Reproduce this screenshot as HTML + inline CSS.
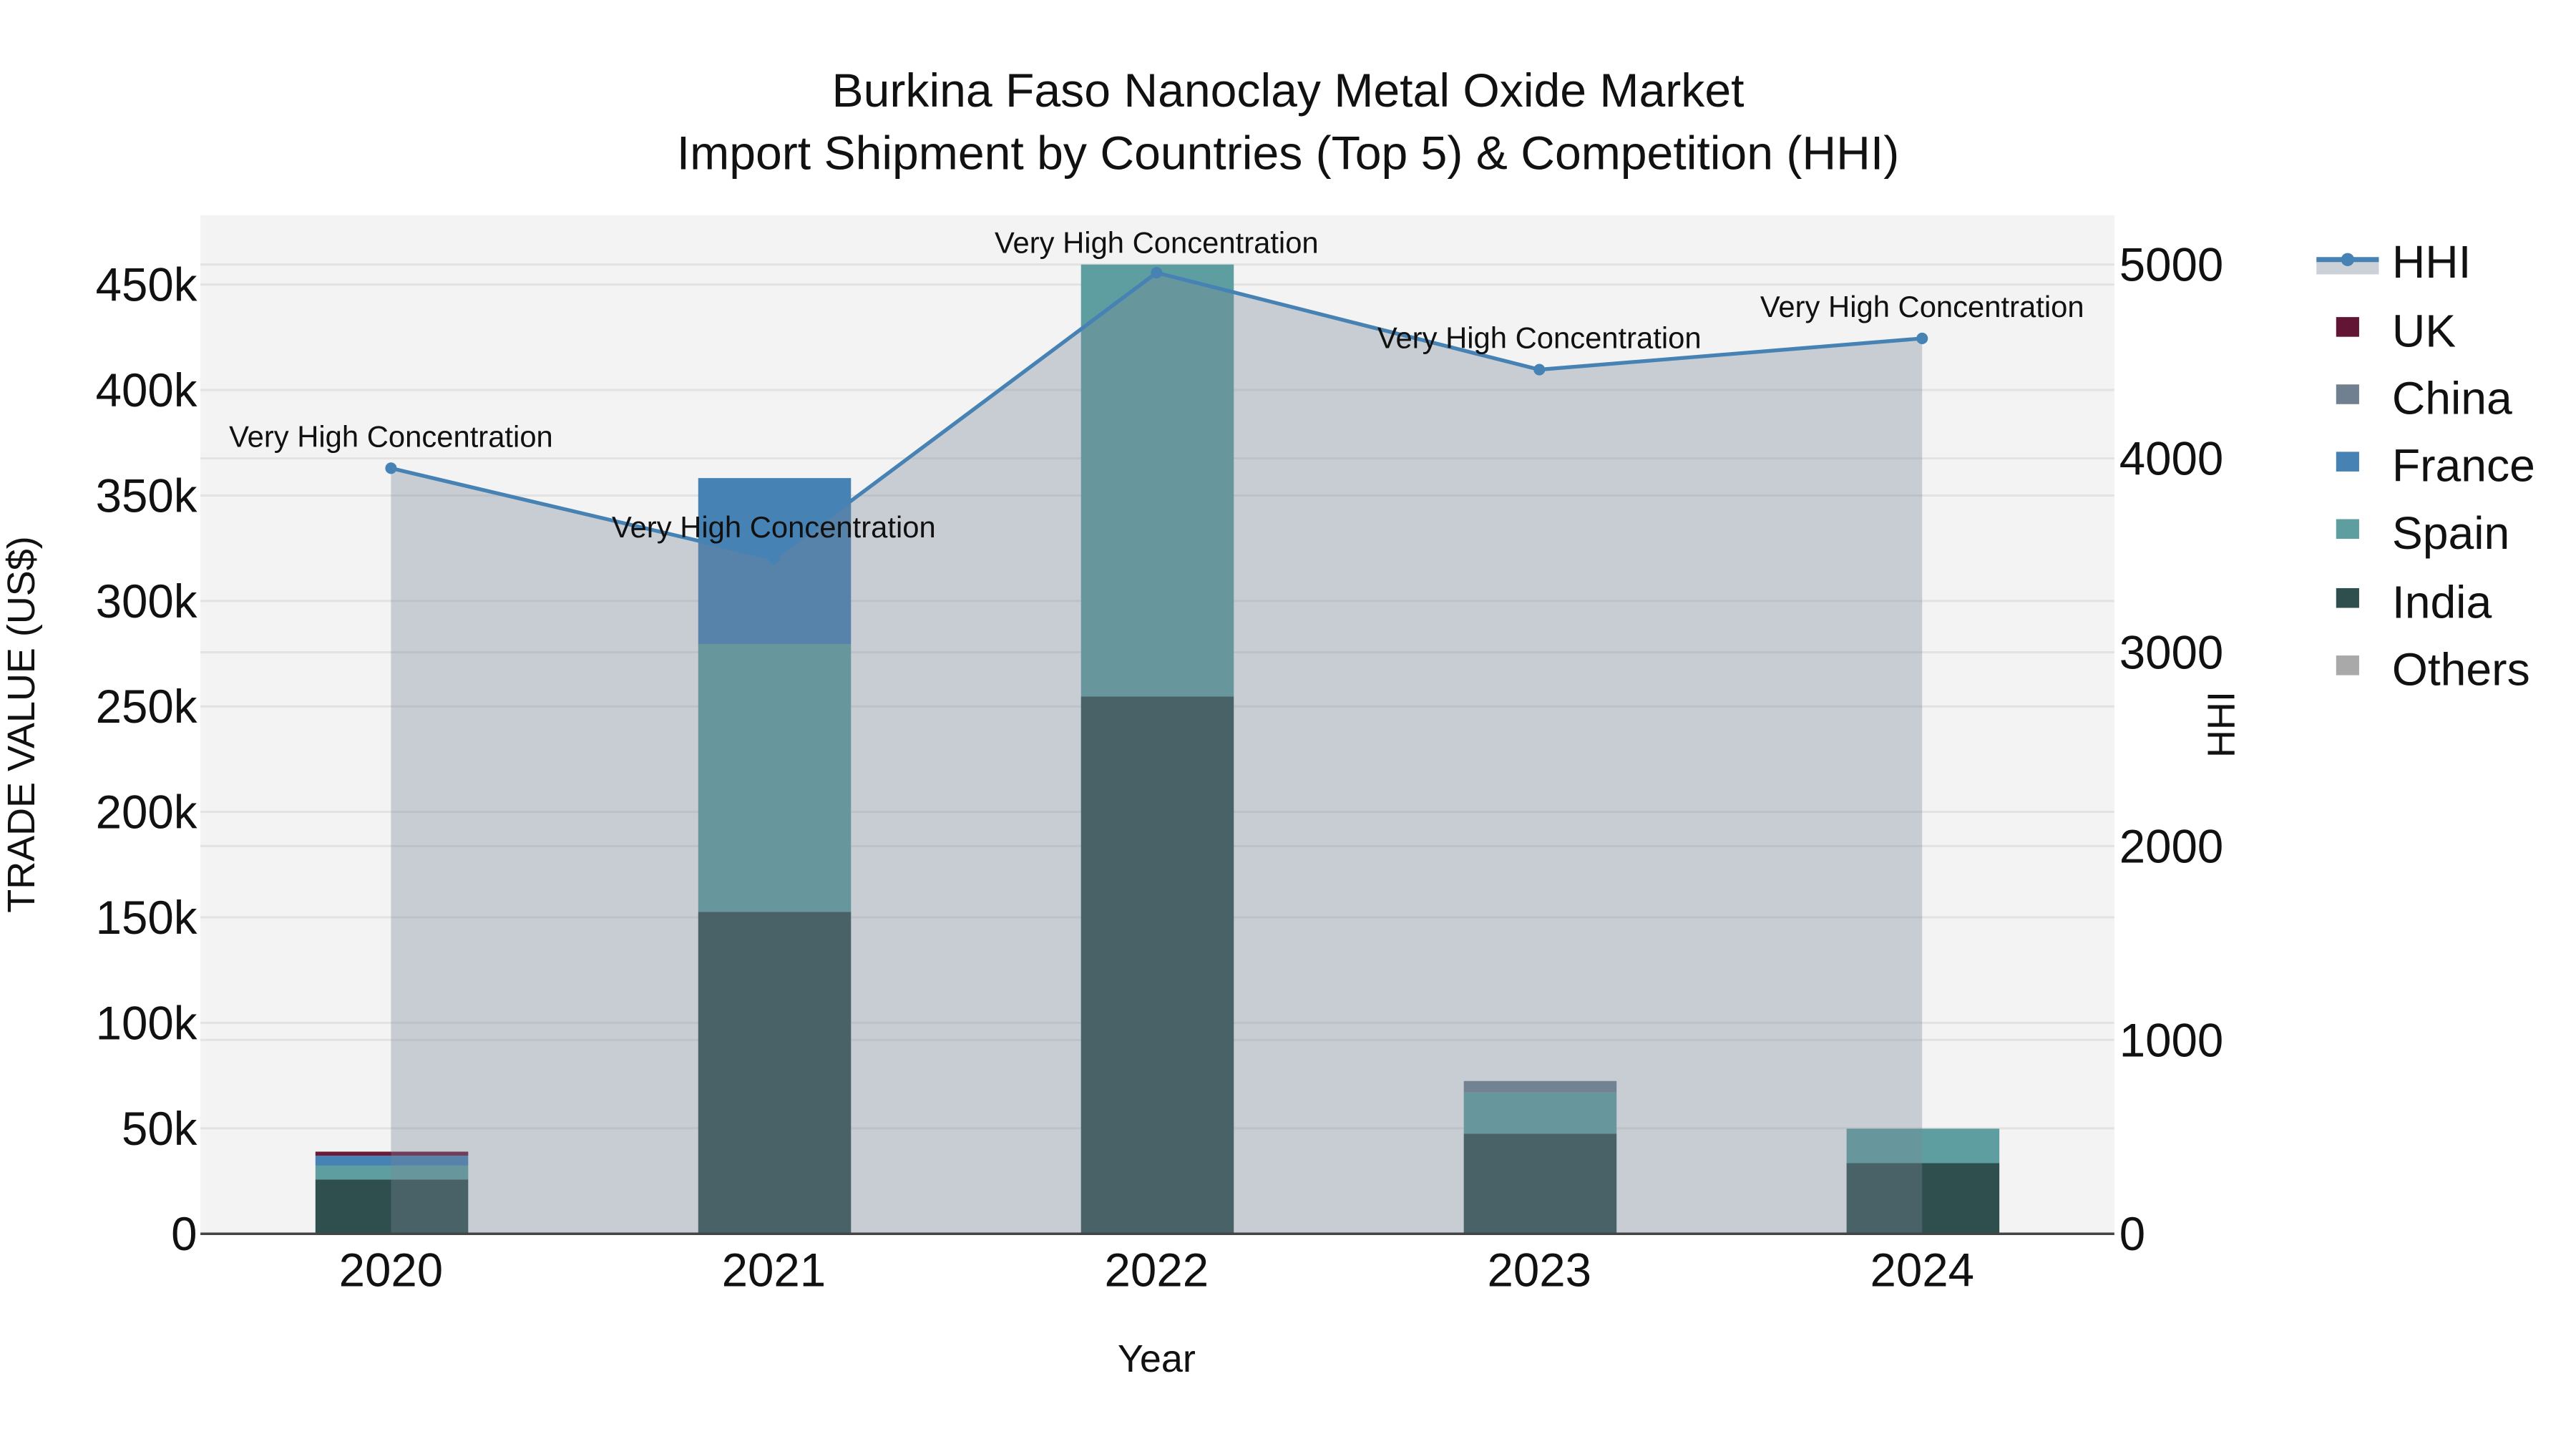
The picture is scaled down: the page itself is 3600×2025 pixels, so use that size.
<!DOCTYPE html>
<html><head><style>html,body{margin:0;padding:0;background:#fff}svg{display:block}</style></head>
<body>
<svg width="3600" height="2025" viewBox="0 0 1568 882" xmlns="http://www.w3.org/2000/svg" font-family="Liberation Sans, sans-serif">
<rect width="1568" height="882" fill="#fff"/>
<rect x="122" y="131" width="1165" height="620" fill="#f3f3f3"/>
<g stroke="#e2e2e2" stroke-width="1.3">
<line x1="122" x2="1287" y1="686.8" y2="686.8"/><line x1="122" x2="1287" y1="622.6" y2="622.6"/><line x1="122" x2="1287" y1="558.4" y2="558.4"/><line x1="122" x2="1287" y1="494.2" y2="494.2"/><line x1="122" x2="1287" y1="430" y2="430"/><line x1="122" x2="1287" y1="365.8" y2="365.8"/><line x1="122" x2="1287" y1="301.6" y2="301.6"/><line x1="122" x2="1287" y1="237.4" y2="237.4"/><line x1="122" x2="1287" y1="173.2" y2="173.2"/>
<line x1="122" x2="1287" y1="633" y2="633"/><line x1="122" x2="1287" y1="515" y2="515"/><line x1="122" x2="1287" y1="397" y2="397"/><line x1="122" x2="1287" y1="279" y2="279"/><line x1="122" x2="1287" y1="161" y2="161"/>
</g>
<g>
<rect x="192" y="718" width="93" height="33" fill="#2f4f4f"/>
<rect x="192" y="709.5" width="93" height="8.5" fill="#5f9ea0"/>
<rect x="192" y="703.5" width="93" height="6" fill="#4682b4"/>
<rect x="192" y="701" width="93" height="2.5" fill="#6b1a3a"/>
<rect x="425" y="555" width="93" height="196" fill="#2f4f4f"/>
<rect x="425" y="392" width="93" height="163" fill="#5f9ea0"/>
<rect x="425" y="291" width="93" height="101" fill="#4682b4"/>
<rect x="658" y="424" width="93" height="327" fill="#2f4f4f"/>
<rect x="658" y="161" width="93" height="263" fill="#5f9ea0"/>
<rect x="891" y="690" width="93" height="61" fill="#2f4f4f"/>
<rect x="891" y="665" width="93" height="25" fill="#5f9ea0"/>
<rect x="891" y="658" width="93" height="7" fill="#708090"/>
<rect x="1124" y="708" width="93" height="43" fill="#2f4f4f"/>
<rect x="1124" y="687" width="93" height="21" fill="#5f9ea0"/>
</g>
<polygon points="238,751 238,285 471,340 704,166 937,225 1170,206 1170,751" fill="rgb(119,136,153)" fill-opacity="0.35"/>
<polyline points="238,285 471,340 704,166 937,225 1170,206" fill="none" stroke="#4682b4" stroke-width="2.3"/>
<g fill="#4682b4"><circle cx="238" cy="285" r="3.5"/><circle cx="471" cy="340" r="3.5"/><circle cx="704" cy="166" r="3.5"/><circle cx="937" cy="225" r="3.5"/><circle cx="1170" cy="206" r="3.5"/></g>
<line x1="122" x2="1287" y1="751" y2="751" stroke="#444" stroke-width="1.5"/>
<g font-size="18.2" text-anchor="middle" fill="#111">
<text x="238" y="272">Very High Concentration</text>
<text x="471" y="327">Very High Concentration</text>
<text x="704" y="154">Very High Concentration</text>
<text x="937" y="212">Very High Concentration</text>
<text x="1170" y="193">Very High Concentration</text>
</g>
<g font-size="28.8" text-anchor="middle" fill="#111">
<text x="784" y="65">Burkina Faso Nanoclay Metal Oxide Market</text>
<text x="784" y="103">Import Shipment by Countries (Top 5) &amp; Competition (HHI)</text>
</g>
<g font-size="28.5" text-anchor="end" fill="#111">
<text x="120" y="761">0</text><text x="120" y="696.8">50k</text><text x="120" y="632.6">100k</text><text x="120" y="568.4">150k</text><text x="120" y="504.2">200k</text><text x="120" y="440">250k</text><text x="120" y="375.8">300k</text><text x="120" y="311.6">350k</text><text x="120" y="247.4">400k</text><text x="120" y="183.2">450k</text>
</g>
<g font-size="28.5" fill="#111">
<text x="1290" y="761">0</text><text x="1290" y="643">1000</text><text x="1290" y="525">2000</text><text x="1290" y="407">3000</text><text x="1290" y="289">4000</text><text x="1290" y="171">5000</text>
</g>
<g font-size="28.5" text-anchor="middle" fill="#111">
<text x="238" y="783">2020</text><text x="471" y="783">2021</text><text x="704" y="783">2022</text><text x="937" y="783">2023</text><text x="1170" y="783">2024</text>
</g>
<text x="704" y="835" font-size="23.5" text-anchor="middle" fill="#111">Year</text>
<text transform="translate(21,441) rotate(-90)" font-size="23.5" text-anchor="middle" fill="#111">TRADE VALUE (US$)</text>
<text transform="translate(1360,441) rotate(-90)" font-size="23.5" text-anchor="middle" fill="#111">HHI</text>
<rect x="1410" y="159" width="38" height="8" fill="#ccd0d7"/>
<line x1="1410" x2="1448" y1="158" y2="158" stroke="#4682b4" stroke-width="3"/>
<circle cx="1429" cy="158" r="4" fill="#4682b4"/>
<g font-size="28" fill="#111">
<text x="1456" y="169">HHI</text><text x="1456" y="211">UK</text><text x="1456" y="252">China</text><text x="1456" y="293">France</text><text x="1456" y="334">Spain</text><text x="1456" y="376">India</text><text x="1456" y="417">Others</text>
</g>
<rect x="1422" y="193" width="14" height="12" fill="#621535"/>
<rect x="1422" y="234" width="14" height="12" fill="#708090"/>
<rect x="1422" y="275" width="14" height="12" fill="#4682b4"/>
<rect x="1422" y="316" width="14" height="12" fill="#5f9ea0"/>
<rect x="1422" y="358" width="14" height="12" fill="#2f4f4f"/>
<rect x="1422" y="399" width="14" height="12" fill="#a9a9a9"/>
</svg>
</body></html>
